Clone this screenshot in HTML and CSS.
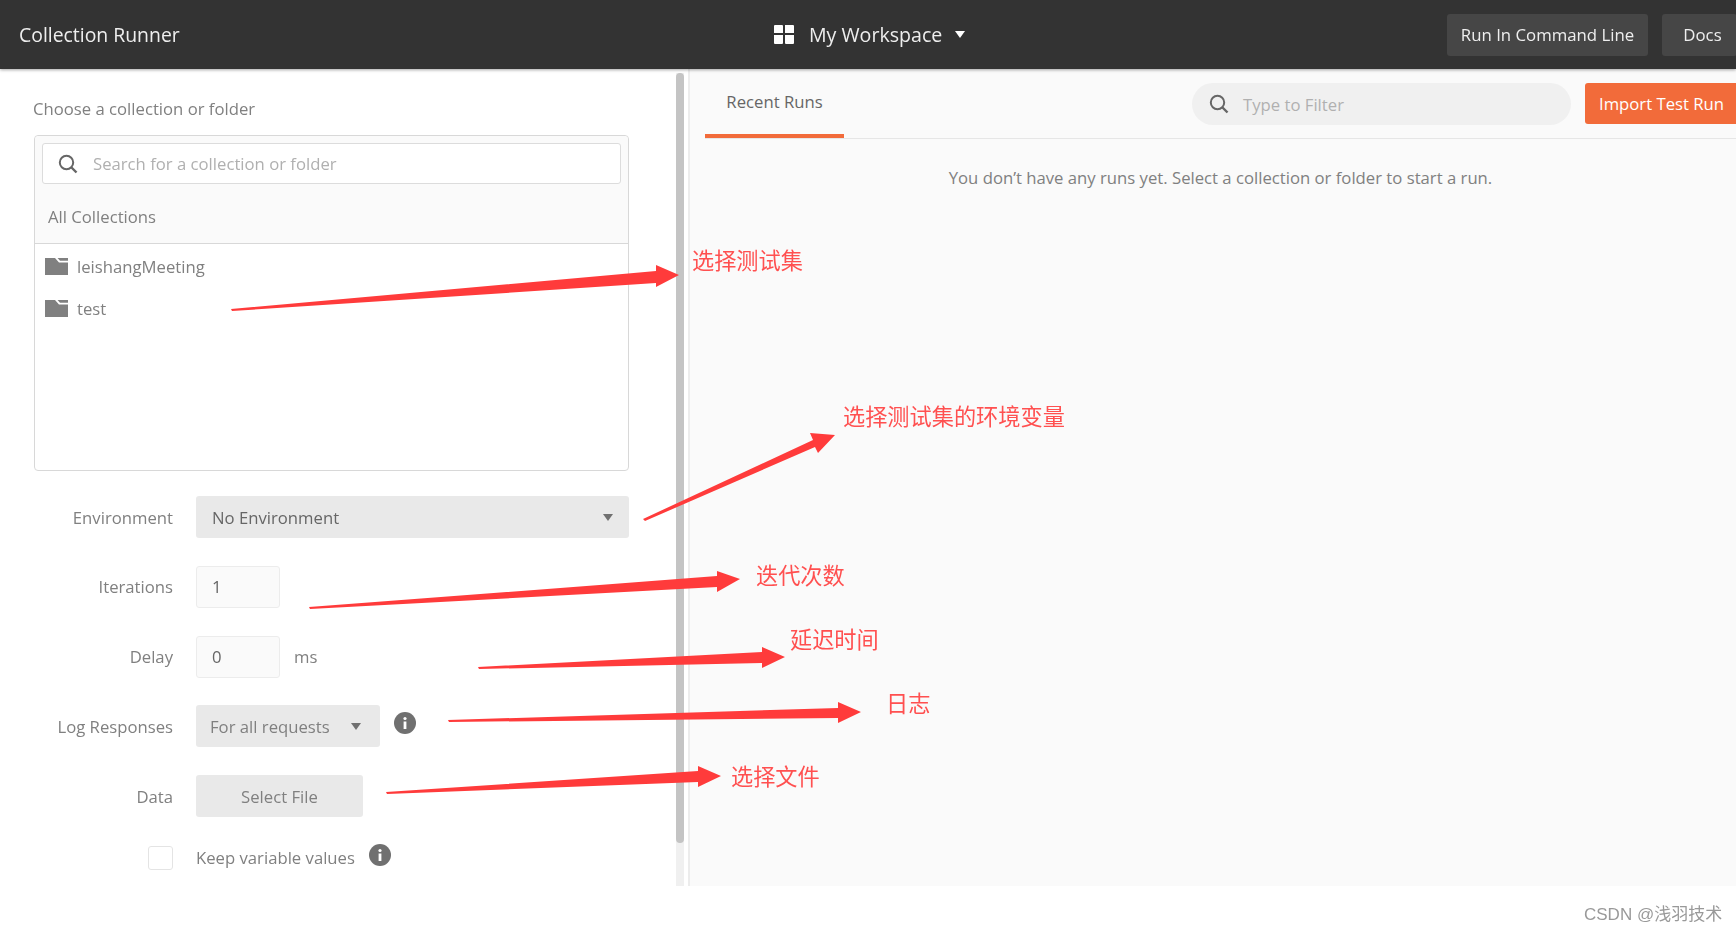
FILE: index.html
```html
<!DOCTYPE html>
<html lang="en">
<head>
  <meta charset="UTF-8">
  <title>Collection Runner</title>
  <link rel="stylesheet" href="styles.css">
</head>
<body>
  <div class="page">
    <div class="topbar">
      <div class="title">Collection Runner</div>
      <div class="workspace">
        <svg class="grid-icon" width="20" height="19" viewBox="0 0 20 19"><path fill="#fff" d="M0 1q0-1 1-1h7q1 0 1 1v7H0zM11 0h8q1 0 1 1v7h-9zM0 10h9v8q0 1-1 1H1q-1 0-1-1zM11 10h9v8q0 1-1 1h-7q-1 0-1-1z"/></svg>
        <span>My Workspace</span>
        <i class="caret caret-white"></i>
      </div>
      <div class="top-buttons">
        <div class="top-btn">Run In Command Line</div>
        <div class="top-btn docs">Docs</div>
      </div>
    </div>

    <div class="main">
      <div class="left">
        <p class="choose">Choose a collection or folder</p>
        <div class="picker">
          <div class="picker-head">
            <div class="search">
              <svg width="20" height="20" viewBox="0 0 20 20"><circle cx="8.5" cy="8.5" r="6.7" fill="none" stroke="#666" stroke-width="2"/><path d="M13.5 13.5l5 5" stroke="#666" stroke-width="2.4"/></svg>
              <span>Search for a collection or folder</span>
            </div>
            <div class="all">All Collections</div>
          </div>
          <div class="list">
            <div class="item">
              <svg width="23" height="17" viewBox="0 0 23 17"><path fill="#808080" d="M0 0h10l4 4.5h9V17H0z"/><path fill="#808080" d="M12.5 0H23v2.8H15z"/></svg>
              <span>leishangMeeting</span>
            </div>
            <div class="item">
              <svg width="23" height="17" viewBox="0 0 23 17"><path fill="#808080" d="M0 0h10l4 4.5h9V17H0z"/><path fill="#808080" d="M12.5 0H23v2.8H15z"/></svg>
              <span>test</span>
            </div>
          </div>
        </div>

        <div class="form">
          <div class="row">
            <label>Environment</label>
            <div class="select env">No Environment<i class="caret"></i></div>
          </div>
          <div class="row">
            <label>Iterations</label>
            <div class="num">1</div>
          </div>
          <div class="row">
            <label>Delay</label>
            <div class="num">0</div>
            <span class="unit">ms</span>
          </div>
          <div class="row">
            <label>Log Responses</label>
            <div class="select log">For all requests<i class="caret"></i></div>
            <svg class="info log-info" width="22" height="22" viewBox="0 0 22 22"><circle cx="11" cy="11" r="11" fill="#707070"/><circle cx="11" cy="6.5" r="1.6" fill="#fff"/><path d="M9.6 9.5h2.8v7.5H9.6z" fill="#fff"/></svg>
          </div>
          <div class="row">
            <label>Data</label>
            <div class="file-btn">Select File</div>
          </div>
          <div class="row keep">
            <label><span class="check"></span></label>
            <span class="keep-text">Keep variable values</span>
            <svg class="info keep-info" width="22" height="22" viewBox="0 0 22 22"><circle cx="11" cy="11" r="11" fill="#707070"/><circle cx="11" cy="6.5" r="1.6" fill="#fff"/><path d="M9.6 9.5h2.8v7.5H9.6z" fill="#fff"/></svg>
          </div>
        </div>
      </div>

      <div class="scroll"><div class="thumb"></div></div>

      <div class="right">
        <div class="tabs">
          <div class="tab">Recent Runs</div>
          <div class="filter">
            <svg width="20" height="20" viewBox="0 0 20 20"><circle cx="8.5" cy="8.5" r="6.7" fill="none" stroke="#666" stroke-width="2"/><path d="M13.5 13.5l5 5" stroke="#666" stroke-width="2.4"/></svg>
            <span>Type to Filter</span>
          </div>
          <div class="import">Import Test Run</div>
        </div>
        <p class="empty">You don’t have any runs yet. Select a collection or folder to start a run.</p>
      </div>
    </div>

    <div class="mark">CSDN @浅羽技术</div>

    <svg class="arrows" width="1736" height="932" viewBox="0 0 1736 932">
      <path d="M231 309L656 271 656 265 679 275 656 287 656 283 232 311z"/>
      <path d="M643 519L813 440 810 433 835 435 818 453 815 447 645 521z"/>
      <path d="M309 607L717 576 717 571 740 579 717 592 717 587 310 609z"/>
      <path d="M478 667L762 652 762 647 785 657 762 668 762 663 479 669z"/>
      <path d="M448 720L838 708 838 702 861 712 838 723 838 718 449 722z"/>
      <path d="M386 792L698 771 698 766 721 776 698 787 698 782 387 794z"/>
    </svg>
    <span class="note n1">选择测试集</span>
    <span class="note n2">选择测试集的环境变量</span>
    <span class="note n3">迭代次数</span>
    <span class="note n4">延迟时间</span>
    <span class="note n5">日志</span>
    <span class="note n6">选择文件</span>
  </div>
</body>
</html>
```

FILE: styles.css
```css
* {
  box-sizing: border-box;
}
body {
  margin: 0;
  background: #fff;
  font-family: "Open Sans", "Noto Sans CJK SC", sans-serif;
  font-size: 16.7px;
  color: #808080;
}
.page {
  position: relative;
  width: 1736px;
  height: 932px;
  overflow: hidden;
  filter: blur(0.4px);
}

/* top bar */
.topbar {
  display: flex;
  align-items: center;
  height: 69px;
  background: #333;
  color: #fff;
  box-shadow: 0 1px 3px rgba(0, 0, 0, 0.35);
  position: relative;
}
.title {
  margin-left: 19px;
  width: 162px;
  font-size: 19.4px;
  white-space: nowrap;
  color: #eee;
}
.workspace {
  display: flex;
  align-items: center;
  margin-left: 593px;
  font-size: 19.6px;
  color: #eee;
}
.grid-icon {
  margin-right: 15px;
}
.caret {
  display: inline-block;
  width: 0;
  height: 0;
  border-left: 5.5px solid transparent;
  border-right: 5.5px solid transparent;
  border-top: 7px solid #707070;
}
.caret-white {
  margin-left: 13px;
  border-top-color: #fff;
}
.top-buttons {
  display: flex;
  gap: 14px;
  margin-left: auto;
  margin-right: -1px;
}
.top-btn {
  display: flex;
  align-items: center;
  justify-content: center;
  width: 201px;
  height: 42px;
  background: #464646;
  border-radius: 3px;
  font-size: 16.8px;
  color: #eee;
}
.docs {
  width: 75px;
  padding-right: 8px;
  padding-left: 14px;
}

/* main area */
.main {
  display: flex;
  height: 817px;
}
.left {
  flex-shrink: 0;
  width: 676px;
  padding: 0 47px 0 33px;
}
.choose {
  margin: 0 0 15px;
  padding-top: 29px;
  line-height: 22px;
}
.picker {
  height: 336px;
  margin-left: 1px;
  border: 1px solid #d8d8d8;
  border-radius: 4px;
}
.picker-head {
  height: 108px;
  padding: 7px 7px 0;
  background: #fafafa;
  border-bottom: 1px solid #d8d8d8;
  border-radius: 4px 4px 0 0;
}
.search {
  display: flex;
  align-items: center;
  height: 41px;
  padding-left: 15px;
  background: #fff;
  border: 1px solid #dcdcdc;
  border-radius: 3px;
  color: #b0b0b0;
}
.search span {
  margin-left: 15px;
}
.all {
  margin: 22px 0 0 6px;
  line-height: 22px;
}
.list {
  padding-top: 1px;
}
.item {
  display: flex;
  align-items: center;
  height: 42px;
  padding-left: 10px;
}
.item span {
  margin-left: 9px;
}

/* form rows */
.form {
  display: flex;
  flex-direction: column;
  gap: 27.75px;
  margin-top: 25px;
}
.row {
  display: flex;
  align-items: center;
  height: 42px;
}
.row label {
  display: flex;
  justify-content: flex-end;
  width: 140px;
  margin-right: 23px;
}
.select {
  display: flex;
  align-items: center;
  justify-content: space-between;
  height: 42px;
  background: #e9e9e9;
  border-radius: 3px;
}
.env {
  width: 433px;
  padding: 0 16px;
  color: #666;
}
.log {
  width: 184px;
  padding: 0 19px 0 14px;
}
.num {
  display: flex;
  align-items: center;
  width: 84px;
  height: 42px;
  padding-left: 15px;
  background: #fafafa;
  border: 1px solid #ececec;
  border-radius: 3px;
  color: #666;
}
.unit {
  margin-left: 14px;
}
.file-btn {
  display: flex;
  align-items: center;
  justify-content: center;
  width: 167px;
  height: 42px;
  background: #e9e9e9;
  border-radius: 3px;
}
.log-info {
  margin: -6px 0 0 14px;
}
.keep {
  height: 24px;
  margin-top: 1px;
}
.check {
  display: block;
  width: 25px;
  height: 24px;
  background: #fff;
  border: 1px solid #e4e4e4;
  border-radius: 3px;
}
.keep-info {
  margin: -6px 0 0 14px;
}

/* scrollbar */
.scroll {
  flex-shrink: 0;
  width: 8px;
  margin-top: 4px;
  background: #f0f0f0;
}
.thumb {
  height: 770px;
  background: #c4c4c4;
  border-radius: 4px;
}

/* right panel */
.right {
  flex: 1;
  min-width: 0;
  margin-left: 4px;
  padding-left: 15px;
  background: #fafafa;
  border-left: 2px solid #ececec;
}
.tabs {
  display: flex;
  height: 70px;
  border-bottom: 1px solid #e6e6e6;
}
.tab {
  display: flex;
  align-items: center;
  justify-content: center;
  flex-shrink: 0;
  width: 139px;
  height: 69px;
  color: #666;
  border-bottom: 4px solid #f26b3a;
}
.filter {
  display: flex;
  align-items: center;
  flex-shrink: 0;
  width: 379px;
  height: 42px;
  margin: 14px 0 0 348px;
  padding-left: 17px;
  background: #f0f0f0;
  border-radius: 21px;
  color: #b0b0b0;
}
.filter span {
  margin-left: 14px;
}
.import {
  display: flex;
  align-items: center;
  flex-shrink: 0;
  width: 151px;
  height: 41px;
  margin: 14px 0 0 14px;
  padding-left: 14px;
  background: #f26b3a;
  border-radius: 3px 0 0 3px;
  color: #fff;
  white-space: nowrap;
}
.empty {
  margin: 28px 0 0;
  line-height: 22px;
  text-align: center;
}

.mark {
  position: absolute;
  left: 1584px;
  top: 904px;
  font-family: "Liberation Sans", "Noto Sans CJK SC", sans-serif;
  font-size: 17px;
  line-height: 22px;
  color: #999;
}

/* red notes drawn over the screenshot */
.arrows {
  position: absolute;
  left: 0;
  top: 0;
}
.arrows path {
  fill: #ff3b3b;
}
.note {
  position: absolute;
  font-family: "Noto Sans CJK SC", sans-serif;
  font-size: 22.2px;
  line-height: 30px;
  color: #ff5050;
  white-space: nowrap;
}
.n1 { left: 692px; top: 244px; }
.n2 { left: 843px; top: 400px; }
.n3 { left: 756px; top: 559px; }
.n4 { left: 790px; top: 623px; }
.n5 { left: 886px; top: 687px; }
.n6 { left: 731px; top: 760px; }
```
